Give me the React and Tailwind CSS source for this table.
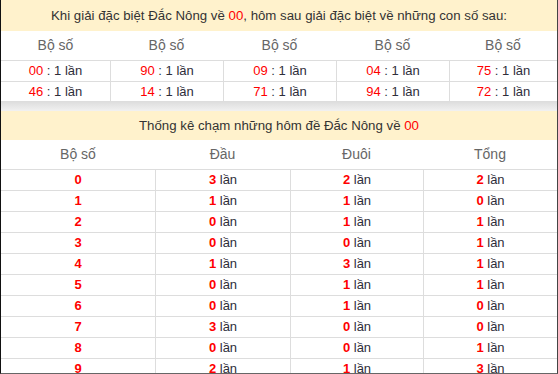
const top = [
  ["00", "90", "09", "04", "75"],
  ["46", "14", "71", "94", "72"],
];

const stats = [
  [0, 3, 2, 2],
  [1, 1, 1, 0],
  [2, 0, 1, 1],
  [3, 0, 0, 1],
  [4, 1, 3, 1],
  [5, 0, 1, 1],
  [6, 0, 1, 0],
  [7, 3, 0, 0],
  [8, 0, 0, 1],
  [9, 2, 1, 3],
];

function Count({ n }) {
  return (
    <span>
      <b className="text-[#ff0000]">{n}</b> lần
    </span>
  );
}

export default function App() {
  return (
    <div
      className="w-[558px] h-[374px] overflow-hidden bg-white border-l border-l-[#111] border-r border-r-[#444] border-b border-b-[#666] text-[#2e2e3a]"
      style={{ fontFamily: '"Liberation Sans", Arial, sans-serif' }}
    >
      <div className="h-[31px] bg-[#fff2cc] flex items-center justify-center text-[13.25px] text-[#333]">
        Khi giải đặc biệt Đắc Nông về&nbsp;<span className="text-[#ff0000]">00</span>, hôm sau giải đặc biệt về những con số sau:
      </div>

      <div className="grid grid-cols-[109px_113px_113px_113px_1fr]">
        {top[0].map((_, i) => (
          <div key={i} className="h-[29px] flex items-center justify-center text-[14px] text-[#666]">
            Bộ số
          </div>
        ))}
        {top.map((row, r) =>
          row.map((num, i) => (
            <div
              key={r + "-" + i}
              className={`h-[21px] flex items-center justify-center text-[13px] border-t border-[#dddddd] ${
                i > 0 ? "border-l" : ""
              } ${r === 1 ? "border-b" : ""}`}
            >
              <span className="text-[#ff0000]">{num}</span>&nbsp;: 1 lần
            </div>
          ))
        )}
      </div>

      <div className="h-[9px] bg-gradient-to-b from-[#dedede] to-[#f1f1f1]"></div>

      <div className="h-[29px] bg-[#fff2cc] flex items-center justify-center text-[13.25px] text-[#333]">
        Thống kê chạm những hôm đề Đắc Nông về&nbsp;<span className="text-[#ff0000]">00</span>
      </div>

      <div className="grid grid-cols-[154px_135px_133px_1fr]">
        {["Bộ số", "Đầu", "Đuôi", "Tổng"].map((h) => (
          <div key={h} className="h-[29px] flex items-center justify-center text-[14px] text-[#666]">
            {h}
          </div>
        ))}
        {stats.map((row) =>
          row.map((v, i) => (
            <div
              key={row[0] + "-" + i}
              className={`h-[21px] flex items-center justify-center text-[13px] border-t border-[#dddddd] ${
                i > 0 ? "border-l" : ""
              }`}
            >
              {i === 0 ? <b className="text-[#ff0000]">{v}</b> : <Count n={v} />}
            </div>
          ))
        )}
      </div>
    </div>
  );
}
